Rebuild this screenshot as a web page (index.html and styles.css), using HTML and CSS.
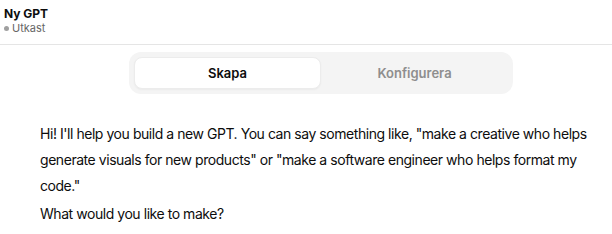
FILE: index.html
```html
<!DOCTYPE html>
<html>
<head>
<meta charset="utf-8">
<link rel="stylesheet" href="styles.css">
</head>
<body>
<header class="topbar">
  <div class="title">Ny GPT</div>
  <div class="status"><span class="dot"></span>Utkast</div>
</header>
<main class="content">
  <div class="tabs-wrap">
    <div class="tabs">
      <div class="tab active">Skapa</div>
      <div class="tab">Konfigurera</div>
    </div>
  </div>
  <div class="message">
    <p>Hi! I'll help you build a new GPT. You can say something like, "make a creative who helps generate visuals for new products" or "make a software engineer who helps format my code."</p>
    <p>What would you like to make?</p>
  </div>
</main>
</body>
</html>
```
FILE: styles.css
```css
* { box-sizing: border-box; }
html, body { margin: 0; padding: 0; background: #fff; }
body {
  font-family: Inter, "Noto Sans", sans-serif;
  color: #0d0d0d;
  width: 612px;
  height: 234px;
  overflow: hidden;
}
.topbar {
  height: 45px;
  padding: 6px 4px 0 4px;
  border-bottom: 1px solid #e5e5e5;
}
.title {
  font-size: 12px;
  font-weight: 700;
  line-height: 15px;
}
.status {
  display: flex;
  align-items: center;
  gap: 3px;
  font-size: 11px;
  line-height: 14px;
  color: #666;
}
.dot {
  width: 5px;
  height: 5px;
  border-radius: 50%;
  background: #a0a0a0;
}
.content {
  padding: 7px 0 0 40px;
}
.tabs-wrap {
  padding-left: 89px;
}
.tabs {
  width: 384px;
  height: 42px;
  padding: 5px;
  background: #f4f4f4;
  border-radius: 12px;
  display: grid;
  grid-template-columns: 1fr 1fr;
}
.tab {
  display: flex;
  align-items: center;
  justify-content: center;
  font-size: 13px;
  font-weight: 600;
  color: #8e8e8e;
}
.tab.active {
  background: #fff;
  color: #0d0d0d;
  border: 1px solid #ececec;
  border-radius: 8px;
  box-shadow: 0 1px 2px rgba(0,0,0,0.04);
}
.message {
  padding-top: 27px;
  font-size: 14px;
  line-height: 26px;
  letter-spacing: -0.45px;
  width: 566px;
}
.message p {
  margin: 0 0 2px 0;
}
```
